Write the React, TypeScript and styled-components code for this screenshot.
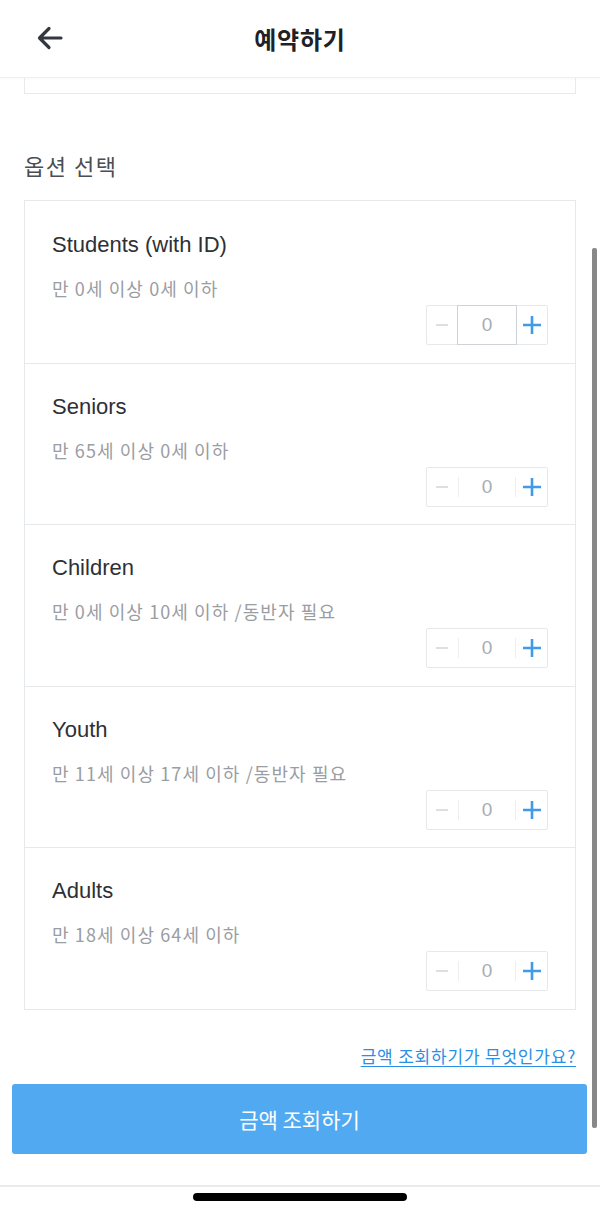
import styled, { createGlobalStyle } from 'styled-components';

const GlobalStyle = createGlobalStyle`
  html, body {
    margin: 0;
    padding: 0;
    background: #ffffff;
  }
  body {
    font-family: 'Liberation Sans', 'Noto Sans CJK KR', sans-serif;
    -webkit-font-smoothing: antialiased;
  }
`;

const options = [
  { title: 'Students (with ID)', desc: '만 0세 이상 0세 이하', focused: true },
  { title: 'Seniors', desc: '만 65세 이상 0세 이하', focused: false },
  { title: 'Children', desc: '만 0세 이상 10세 이하 /동반자 필요', focused: false },
  { title: 'Youth', desc: '만 11세 이상 17세 이하 /동반자 필요', focused: false },
  { title: 'Adults', desc: '만 18세 이상 64세 이하', focused: false },
];

const BackIcon = () => (
  <svg width="28" height="28" viewBox="0 0 28 28" fill="none">
    <path
      d="M25 14H4M13 4.5L3.5 14L13 23.5"
      stroke="#333840"
      strokeWidth="3.2"
      strokeLinecap="round"
      strokeLinejoin="round"
    />
  </svg>
);

const PlusIcon = () => (
  <svg width="20" height="20" viewBox="0 0 20 20">
    <path d="M10 1v18M1 10h18" stroke="#3f9be9" strokeWidth="2.6" />
  </svg>
);

const MinusIcon = () => (
  <svg width="14" height="14" viewBox="0 0 14 14">
    <path d="M1 7h12" stroke="#dde0e3" strokeWidth="2" />
  </svg>
);

export default function App() {
  return (
    <Page>
      <GlobalStyle />
      <Header>
        <BackButton>
          <BackIcon />
        </BackButton>
        <HeaderTitle>예약하기</HeaderTitle>
      </Header>

      <Content>
        <CardStub />
        <SectionTitle>옵션 선택</SectionTitle>
        <OptionCard>
          {options.map((item) => (
            <OptionRow key={item.title}>
              <OptionTitle>{item.title}</OptionTitle>
              <OptionDesc>{item.desc}</OptionDesc>
              <Stepper>
                <StepButton>
                  <MinusIcon />
                </StepButton>
                <Count $focused={item.focused}>0</Count>
                <StepButton>
                  <PlusIcon />
                </StepButton>
              </Stepper>
            </OptionRow>
          ))}
        </OptionCard>

        <HelpLink>금액 조회하기가 무엇인가요?</HelpLink>
        <SubmitButton>금액 조회하기</SubmitButton>
      </Content>

      <HomeBar>
        <HomeIndicator />
      </HomeBar>

      <ScrollThumb />
    </Page>
  );
}

const Page = styled.div`
  position: relative;
  width: 600px;
  height: 1214px;
  overflow: hidden;
  background: #fff;
  display: flex;
  flex-direction: column;
`;

const Header = styled.header`
  height: 77px;
  flex-shrink: 0;
  display: flex;
  align-items: center;
  justify-content: center;
  position: relative;
  border-bottom: 1px solid #eef0f2;
  box-shadow: 0 1px 2px rgba(0, 0, 0, 0.03);
  z-index: 1;
`;

const BackButton = styled.div`
  position: absolute;
  left: 36px;
  top: 24px;
  width: 28px;
  height: 28px;
  display: flex;
`;

const HeaderTitle = styled.h1`
  margin: 0;
  font-family: 'Noto Sans CJK KR', sans-serif;
  font-size: 24px;
  font-weight: 700;
  color: #1e2126;
  letter-spacing: 0.8px;
`;

const Content = styled.main`
  flex: 1;
  display: flex;
  flex-direction: column;
`;

const CardStub = styled.div`
  margin: 0 24px;
  height: 15px;
  border: 1px solid #e8ebee;
  border-top: none;
`;

const SectionTitle = styled.h2`
  margin: 56px 0 0 24px;
  font-family: 'Noto Sans CJK KR', sans-serif;
  font-size: 22px;
  line-height: 30px;
  font-weight: 400;
  color: #4a4d52;
  letter-spacing: 1.5px;
`;

const OptionCard = styled.section`
  margin: 20px 24px 0 24px;
  border: 1px solid #e6e9ec;
`;

const OptionRow = styled.div`
  display: flex;
  flex-direction: column;
  padding: 31px 27px 17.5px 27px;
  border-top: 1px solid #e6e9ec;

  &:first-child {
    border-top: none;
    padding-top: 32px;
  }
`;

const OptionTitle = styled.div`
  font-size: 22px;
  line-height: 24px;
  color: #2d3035;
`;

const OptionDesc = styled.div`
  margin-top: 20px;
  font-family: 'Noto Sans CJK KR', sans-serif;
  font-size: 18px;
  line-height: 22px;
  letter-spacing: 1.1px;
  color: #9a9da2;
`;

const Stepper = styled.div`
  align-self: flex-end;
  margin-top: 6px;
  display: flex;
  align-items: stretch;
  height: 40px;
  box-sizing: border-box;
  border: 1px solid #e6e9ec;
  border-radius: 2px;
`;

const StepButton = styled.div`
  width: 30px;
  display: flex;
  align-items: center;
  justify-content: center;
`;

const Count = styled.div<{ $focused: boolean }>`
  width: 60px;
  display: flex;
  align-items: center;
  justify-content: center;
  position: relative;
  font-size: 19px;
  color: #a9adb2;
  box-sizing: border-box;
  border: 1px solid ${(p) => (p.$focused ? '#cfd3d7' : 'transparent')};
  margin: ${(p) => (p.$focused ? '-1px 0' : '0')};

  &::before,
  &::after {
    content: '';
    position: absolute;
    top: 8px;
    bottom: 8px;
    width: 1px;
    background: #eceef0;
    display: ${(p) => (p.$focused ? 'none' : 'block')};
  }
  &::before {
    left: 0;
  }
  &::after {
    right: 0;
  }
`;

const HelpLink = styled.a`
  align-self: flex-end;
  margin: 35px 24px 0 0;
  font-family: 'Noto Sans CJK KR', sans-serif;
  font-size: 17px;
  line-height: 22px;
  letter-spacing: 0.8px;
  color: #2b8fe6;
  text-decoration: underline;
  text-underline-offset: 3px;
  cursor: pointer;
`;

const SubmitButton = styled.button`
  margin: 17px 13px 0 12px;
  height: 70px;
  border: none;
  border-radius: 3px;
  background: #51aaf1;
  color: #fff;
  font-family: 'Noto Sans CJK KR', sans-serif;
  font-size: 21px;
  cursor: pointer;
`;

const HomeBar = styled.footer`
  height: 29px;
  flex-shrink: 0;
  border-top: 2px solid #e9ecef;
  display: flex;
  justify-content: center;
  padding-top: 6px;
  box-sizing: border-box;
`;

const HomeIndicator = styled.div`
  width: 214px;
  height: 8px;
  border-radius: 4px;
  background: #000;
`;

const ScrollThumb = styled.div`
  position: absolute;
  right: 3px;
  top: 248px;
  width: 5px;
  height: 880px;
  border-radius: 2px;
  background: #888;
`;
